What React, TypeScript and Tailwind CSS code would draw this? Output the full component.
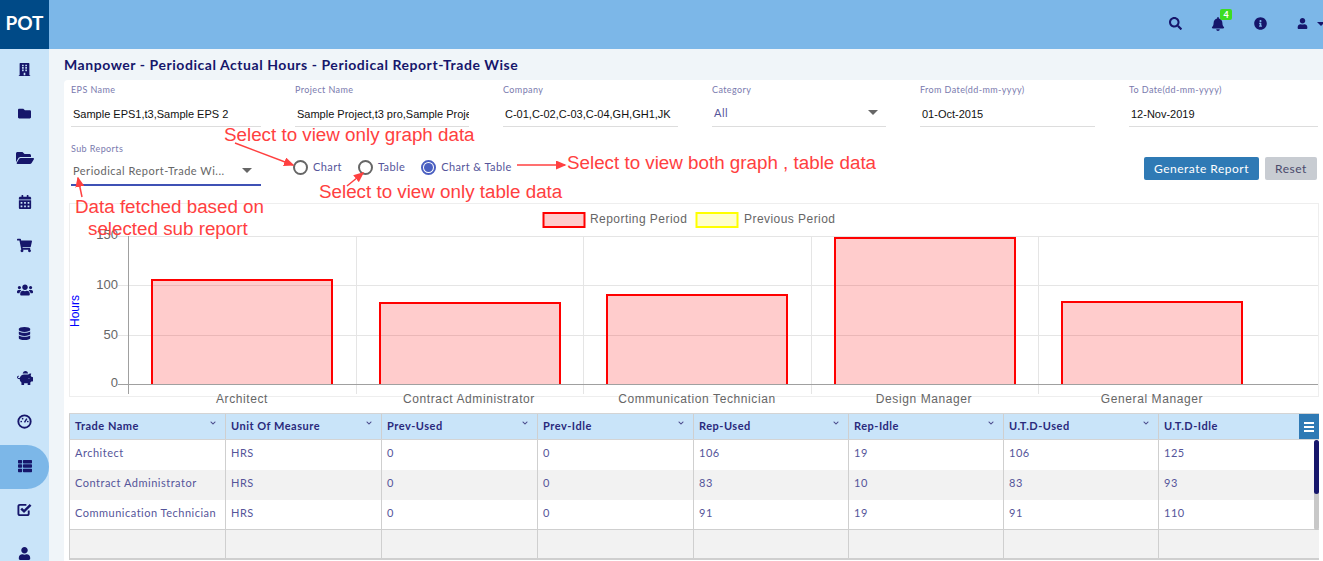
import React from 'react';
import {
  FaBell,
  FaBuilding,
  FaCalendarAlt,
  FaChevronDown,
  FaDatabase,
  FaFolder,
  FaFolderOpen,
  FaInfoCircle,
  FaPiggyBank,
  FaSearch,
  FaShoppingCart,
  FaThList,
  FaUser,
  FaUsers,
} from 'react-icons/fa';

function Gauge() {
  return (
    <svg width="15" height="15" viewBox="0 0 16 16" className="text-[#16166b]">
      <circle cx="8" cy="8" r="6.6" fill="none" stroke="currentColor" strokeWidth="2" />
      <path d="M8 9 L10.5 5" stroke="currentColor" strokeWidth="1.5" />
      <circle cx="4.5" cy="8" r="0.9" fill="currentColor" />
      <circle cx="6" cy="5" r="0.9" fill="currentColor" />
      <circle cx="11.5" cy="8" r="0.9" fill="currentColor" />
    </svg>
  );
}

function CheckBox() {
  return (
    <svg width="15" height="15" viewBox="0 0 16 16" fill="none" stroke="currentColor">
      <path d="M12.5 9 V12.5 A1.5 1.5 0 0 1 11 14 H3 A1.5 1.5 0 0 1 1.5 12.5 V4.5 A1.5 1.5 0 0 1 3 3 H10" strokeWidth="2" />
      <path d="M4.5 7 L7.5 10 L14.5 3" strokeWidth="2.6" />
    </svg>
  );
}

const navIcons = [
  <FaBuilding size={13} />,
  <FaFolder size={13} />,
  <FaFolderOpen size={18} />,
  <FaCalendarAlt size={14} />,
  <FaShoppingCart size={15} />,
  <FaUsers size={16} />,
  <FaDatabase size={13} />,
  <FaPiggyBank size={16} />,
  <Gauge />,
  <FaThList size={14} />,
  <CheckBox />,
  <FaUser size={13} />,
];

const fields = [
  { label: 'EPS Name', value: 'Sample EPS1,t3,Sample EPS 2', w: 'w-[190px]' },
  { label: 'Project Name', value: 'Sample Project,t3 pro,Sample Project 2', w: 'w-[174px]' },
  { label: 'Company', value: 'C-01,C-02,C-03,C-04,GH,GH1,JK', w: 'w-[175px]' },
  { label: 'Category', value: 'All', w: 'w-[174px]', select: true },
  { label: 'From Date(dd-mm-yyyy)', value: '01-Oct-2015', w: 'w-[175px]' },
  { label: 'To Date(dd-mm-yyyy)', value: '12-Nov-2019', w: 'w-[189px]' },
];

const columns = ['Trade Name', 'Unit Of Measure', 'Prev-Used', 'Prev-Idle', 'Rep-Used', 'Rep-Idle', 'U.T.D-Used', 'U.T.D-Idle'];

const rows = [
  ['Architect', 'HRS', '0', '0', '106', '19', '106', '125'],
  ['Contract Administrator', 'HRS', '0', '0', '83', '10', '83', '93'],
  ['Communication Technician', 'HRS', '0', '0', '91', '19', '91', '110'],
  ['', '', '', '', '', '', '', ''],
];

const bars = [
  { x: 152, top: 280, label: 'Architect', cx: 242 },
  { x: 380, top: 303, label: 'Contract Administrator', cx: 469 },
  { x: 607, top: 295, label: 'Communication Technician', cx: 697 },
  { x: 835, top: 238, label: 'Design Manager', cx: 924 },
  { x: 1062, top: 302, label: 'General Manager', cx: 1152 },
];

const gridCols = 'grid grid-cols-[156px_156px_156px_156px_155px_155px_155px_161px]';

function Chart() {
  return (
    <div className="h-[194px] w-[1250px] ml-[5px] border border-[#eeeeee]">
      <svg
        width="1248"
        height="192"
        viewBox="70 204 1248 192"
        className="overflow-visible"
        fontFamily="'Liberation Sans', Arial, sans-serif"
      >
        <rect x="543.5" y="213" width="41" height="14" fill="#ffcccc" stroke="#ff0000" strokeWidth="2" />
        <text x="590" y="223" fontSize="12" letterSpacing="0.45" fill="#666666">Reporting Period</text>
        <rect x="696.5" y="213" width="41" height="14" fill="#ffffcc" stroke="#ffff00" strokeWidth="2" />
        <text x="744" y="223" fontSize="12" letterSpacing="0.45" fill="#666666">Previous Period</text>

        {[236.5, 285.5, 335.5].map((y) => (
          <line key={y} x1="118" x2="1318" y1={y} y2={y} stroke="#e5e5e5" />
        ))}
        {[356.5, 583.5, 811.5, 1038.5].map((x) => (
          <line key={x} x1={x} x2={x} y1="236" y2="394" stroke="#e5e5e5" />
        ))}
        {bars.map((b) => (
          <path
            key={b.label}
            d={`M${b.x} 384 V${b.top} H${b.x + 180} V384`}
            fill="#ff000033"
            stroke="#ff0000"
            strokeWidth="2"
          />
        ))}
        <line x1="128.5" x2="128.5" y1="236" y2="394" stroke="#a0a0a0" />
        <line x1="118" x2="1318" y1="384.5" y2="384.5" stroke="#a0a0a0" />

        {[['150', 239], ['100', 289], ['50', 339], ['0', 387]].map(([t, y]) => (
          <text key={t} x="118" y={y} textAnchor="end" fontSize="13" fill="#666666">{t}</text>
        ))}
        <text transform="translate(79 311) rotate(-90)" textAnchor="middle" fontSize="12" fill="#0000ff">Hours</text>
        {bars.map((b) => (
          <text key={b.label} x={b.cx} y="403" textAnchor="middle" fontSize="12" letterSpacing="0.6" fill="#666666">{b.label}</text>
        ))}
      </svg>
    </div>
  );
}

function Radio({ label, on }: { label: string; on?: boolean }) {
  return (
    <div className="flex items-center gap-[5px]">
      {on ? (
        <span className="w-[15px] h-[15px] rounded-full border-2 border-[#4a5fc1] flex items-center justify-center">
          <span className="w-[9px] h-[9px] rounded-full bg-[#4a5fc1]" />
        </span>
      ) : (
        <span className="w-[15px] h-[15px] rounded-full border-2 border-[#666666]" />
      )}
      <span className="text-[11px] tracking-[0.4px] text-[#55559a] leading-none mb-[2px]">{label}</span>
    </div>
  );
}

function Annotations() {
  const note = "absolute text-[18.8px] leading-[21px] text-[#ff4040] whitespace-nowrap font-['Liberation_Sans']";
  return (
    <>
      <span className={`${note} left-[224px] top-[124px]`}>Select to view only graph data</span>
      <span className={`${note} left-[319px] top-[181px]`}>Select to view only table data</span>
      <span className={`${note} left-[567px] top-[152px]`}>Select to view both graph , table data</span>
      <span className={`${note} left-[75px] top-[196px]`}>Data fetched based on</span>
      <span className={`${note} left-[88px] top-[218px]`}>selected sub report</span>
      <svg width="1323" height="561" className="absolute left-0 top-0 pointer-events-none">
        <defs>
          <marker id="head" markerWidth="7" markerHeight="6" refX="6" refY="3" orient="auto">
            <path d="M0 0 L7 3 L0 6 Z" fill="#ff4040" />
          </marker>
        </defs>
        <g stroke="#ff4040" strokeWidth="1.5" fill="none">
          <line x1="235" y1="143" x2="293" y2="165" markerEnd="url(#head)" />
          <line x1="347" y1="186" x2="363" y2="173" markerEnd="url(#head)" />
          <line x1="517" y1="165" x2="565" y2="165" markerEnd="url(#head)" />
          <line x1="82" y1="197" x2="78" y2="178" markerEnd="url(#head)" />
        </g>
      </svg>
    </>
  );
}

export default function App() {
  return (
    <div className="relative h-[561px] w-[1323px] overflow-hidden flex font-['Lato'] bg-[#f0f5f9]">
      <aside className="w-[49px] shrink-0 bg-[#c9e4f9] flex flex-col">
        <div className="h-[49px] shrink-0 bg-[#004a87] flex items-center justify-center pb-[3px] text-white font-bold text-[19px]">POT</div>
        <div className="flex flex-col">
          {navIcons.map((icon, i) => (
            <div
              key={i}
              className={`h-[44px] shrink-0 pb-[3px] flex items-center justify-center text-[#16166b] ${i === 9 ? 'bg-[#7cb7e8] rounded-r-[22px]' : ''}`}
            >
              {icon}
            </div>
          ))}
        </div>
      </aside>

      <div className="flex-1 min-w-0 flex flex-col">
        <header className="h-[49px] shrink-0 bg-[#7cb7e8] flex items-center justify-end pb-[2px] text-[#16166b]">
          <FaSearch size={13} className="mr-[29px]" />
          <div className="relative mr-[29px]">
            <FaBell size={14} />
            <span className="absolute left-[9px] top-[-8px] w-[12px] h-[11px] rounded-[2px] bg-[#3ddc20] text-white text-[9px] font-bold leading-[11px] text-center">4</span>
          </div>
          <FaInfoCircle size={13} className="mr-[30px]" />
          <FaUser size={11} className="mr-[9px]" />
          <span className="w-0 h-0 mr-[-2px] border-x-[4px] border-x-transparent border-t-[4px] border-t-[#16166b]" />
        </header>

        <main className="flex-1 pl-[15px] min-h-0">
          <h1 className="h-[31px] flex items-center text-[14px] font-bold tracking-[0.55px] text-[#16166b]">
            Manpower - Periodical Actual Hours - Periodical Report-Trade Wise
          </h1>

          <section className="bg-white rounded-tl-[4px] h-[481px]">
            <div className="flex gap-[34px] pl-[7px] pt-[4px]">
              {fields.map((f) => (
                <div key={f.label} className={f.w}>
                  <div className="text-[9px] h-[12px] leading-[12px] tracking-[0.4px] text-[#7a7aae]">{f.label}</div>
                  <div className="h-[32px] mt-[-1px] pt-[7px] border-b border-[#dddddd] flex items-center justify-between overflow-hidden">
                    <span className={`whitespace-nowrap pl-[2px] ${f.select ? "text-[#55559a] font-['Lato'] tracking-[0.5px] text-[11px] mt-[-2px]" : "text-[#111111] font-['Liberation_Sans'] text-[11px]"}`}>
                      {f.value}
                    </span>
                    {f.select && <span className="mr-[8px] w-0 h-0 border-x-[5px] border-x-transparent border-t-[5px] border-t-[#666666] mt-[-4px]" />}
                  </div>
                </div>
              ))}
            </div>

            <div className="flex pl-[7px] pt-[16px]">
              <div className="w-[190px]">
                <div className="text-[9px] h-[12px] leading-[12px] tracking-[0.4px] text-[#7a7aae]">Sub Reports</div>
                <div className="h-[26px] mt-[5px] border-b-2 border-[#3f51b5] flex items-center justify-between pl-[2px] pr-[9px]">
                  <span className="text-[11px] tracking-[0.5px] text-[#666666] whitespace-nowrap mb-[1px]">Periodical Report-Trade Wi...</span>
                  <span className="w-0 h-0 border-x-[5px] border-x-transparent border-t-[5px] border-t-[#666666] mb-[4px]" />
                </div>
              </div>
              <div className="flex items-center gap-[16px] ml-[32px] h-[16px] mt-[16px]">
                <Radio label="Chart" />
                <Radio label="Table" />
                <Radio label="Chart & Table" on />
              </div>
              <div className="ml-auto mr-[6px] flex gap-[6px] mt-[14px]">
                <button className="h-[23px] w-[115px] rounded-[2px] bg-[#2f7ab5] text-white text-[12px] tracking-[0.5px]">Generate Report</button>
                <button className="h-[23px] w-[52px] rounded-[2px] bg-[#c8ccd2] text-[#4a4a6c] text-[12px] tracking-[0.5px]">Reset</button>
              </div>
            </div>

            <div className="mt-[17px]">
              <Chart />
            </div>

            <div className="relative mt-[16px] ml-[5px] w-[1250px] border-t border-[#d4d4d4] overflow-hidden">
              <div className={`${gridCols} h-[26px] bg-[#c9e4f9] border-b border-[#d4d4d4]`}>
                {columns.map((c) => (
                  <div key={c} className="relative border-l border-[#cfcfcf] flex items-center pl-[5px] text-[11px] font-bold tracking-[0.5px] text-[#2a2a7c]">
                    {c}
                    <FaChevronDown size={6} className="absolute right-[9px] top-[6px] text-[#4a4a8c]" />
                  </div>
                ))}
              </div>
              {rows.map((r, i) => (
                <div
                  key={i}
                  className={`${gridCols} h-[30px] ${i % 2 ? 'bg-[#f2f2f2]' : 'bg-white'} ${i === 2 ? 'border-b border-[#cfcfcf]' : ''} ${i === 3 ? 'border-b-2 border-[#cfcfcf]' : ''}`}
                >
                  {r.map((v, j) => (
                    <div key={j} className="border-l border-[#cfcfcf] pl-[5px] pt-[6px] text-[11px] tracking-[0.5px] text-[#55559a] leading-[14px]">{v}</div>
                  ))}
                </div>
              ))}
              <div className="absolute left-[1230px] top-0 w-[20px] h-[25px] bg-[#2f7ab5] flex flex-col items-center justify-center gap-[2px]">
                <span className="w-[10px] h-[2px] bg-white" />
                <span className="w-[10px] h-[2px] bg-white" />
                <span className="w-[10px] h-[2px] bg-white" />
              </div>
              <div className="absolute left-[1245px] top-[26px] w-[5px] h-[90px] rounded-[3px] bg-[#c8c8c8]">
                <div className="h-[54px] rounded-[3px] bg-[#16166b]" />
              </div>
            </div>
          </section>
        </main>
      </div>

      <Annotations />
    </div>
  );
}
